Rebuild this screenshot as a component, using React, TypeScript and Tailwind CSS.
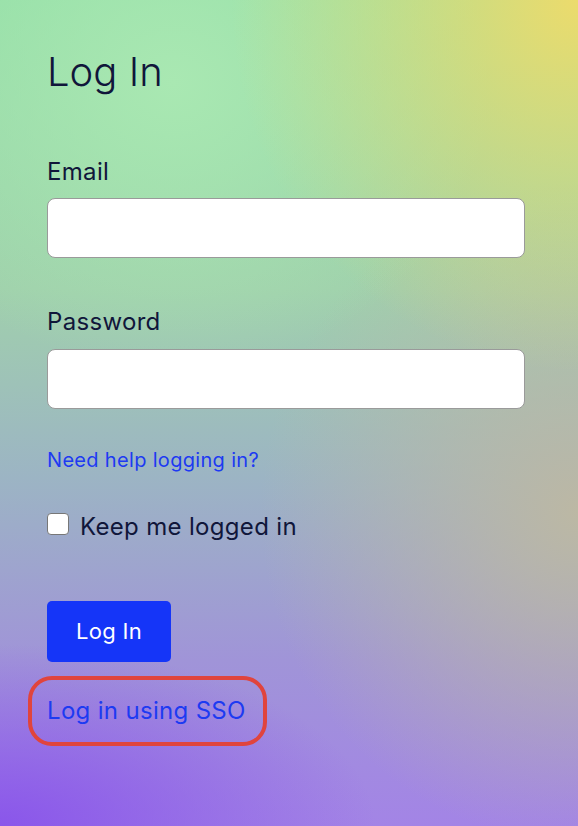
import { useState } from 'react';

export default function App() {
  const [email, setEmail] = useState('');
  const [password, setPassword] = useState('');
  const [remember, setRemember] = useState(false);

  return (
    <div className="min-h-screen w-full bg-[radial-gradient(ellipse_60%_45%_at_100%_0%,#ecdb6c_0%,rgba(236,219,108,0)_100%),radial-gradient(ellipse_55%_35%_at_30%_10%,#a9e8b2_0%,rgba(169,232,178,0)_100%),radial-gradient(ellipse_65%_22%_at_0%_100%,#8a56ea_0%,rgba(138,86,234,0)_100%),radial-gradient(ellipse_55%_40%_at_100%_62%,#bcb8a4_0%,rgba(188,184,164,0)_100%),linear-gradient(to_bottom,#92dea6_0%,#a0d0ac_35%,#9cb4c4_58%,#a094d8_80%,#a384e6_100%)] font-['Inter',sans-serif] tracking-[0.02em] text-[#10163a]">
      <div className="flex w-[478px] flex-col pl-[47px] pt-[48px] box-content">
        <h1 className="text-[40px] leading-[48px] font-light tracking-normal">Log In</h1>

        <label htmlFor="email" className="mt-[58px] text-[24px] leading-[36px]">
          Email
        </label>
        <input
          id="email"
          type="email"
          value={email}
          onChange={(e) => setEmail(e.target.value)}
          className="mt-[8px] h-[60px] w-full rounded-[8px] border border-[#9a9a9a] bg-white px-3 text-[20px] outline-none"
        />

        <label htmlFor="password" className="mt-[46px] text-[24px] leading-[36px]">
          Password
        </label>
        <input
          id="password"
          type="password"
          value={password}
          onChange={(e) => setPassword(e.target.value)}
          className="mt-[9px] h-[60px] w-full rounded-[8px] border border-[#9a9a9a] bg-white px-3 text-[20px] outline-none"
        />

        <a href="#" className="mt-[36px] self-start text-[20px] leading-[30px] text-[#1d3af2]">
          Need help logging in?
        </a>

        <label className="mt-[34px] flex items-start gap-[11px] text-[24px] leading-[36px]">
          <input
            type="checkbox"
            checked={remember}
            onChange={(e) => setRemember(e.target.checked)}
            className="mt-[4px] h-[22px] w-[22px] appearance-none rounded-[4px] border border-[#777] bg-white"
          />
          Keep me logged in
        </label>

        <button className="mt-[56px] h-[61px] w-[124px] rounded-[5px] bg-[#1535f8] text-[22px] text-white">
          Log In
        </button>

        <div className="relative mt-[31px] self-start">
          <a href="#" className="text-[24px] leading-[36px] text-[#1d3af2]">
            Log in using SSO
          </a>
          {/* annotation ring */}
          <span className="pointer-events-none absolute -left-[19px] -right-[21px] -top-[17px] -bottom-[17px] rounded-[24px] border-4 border-[#e0443d]" />
        </div>
      </div>
    </div>
  );
}
